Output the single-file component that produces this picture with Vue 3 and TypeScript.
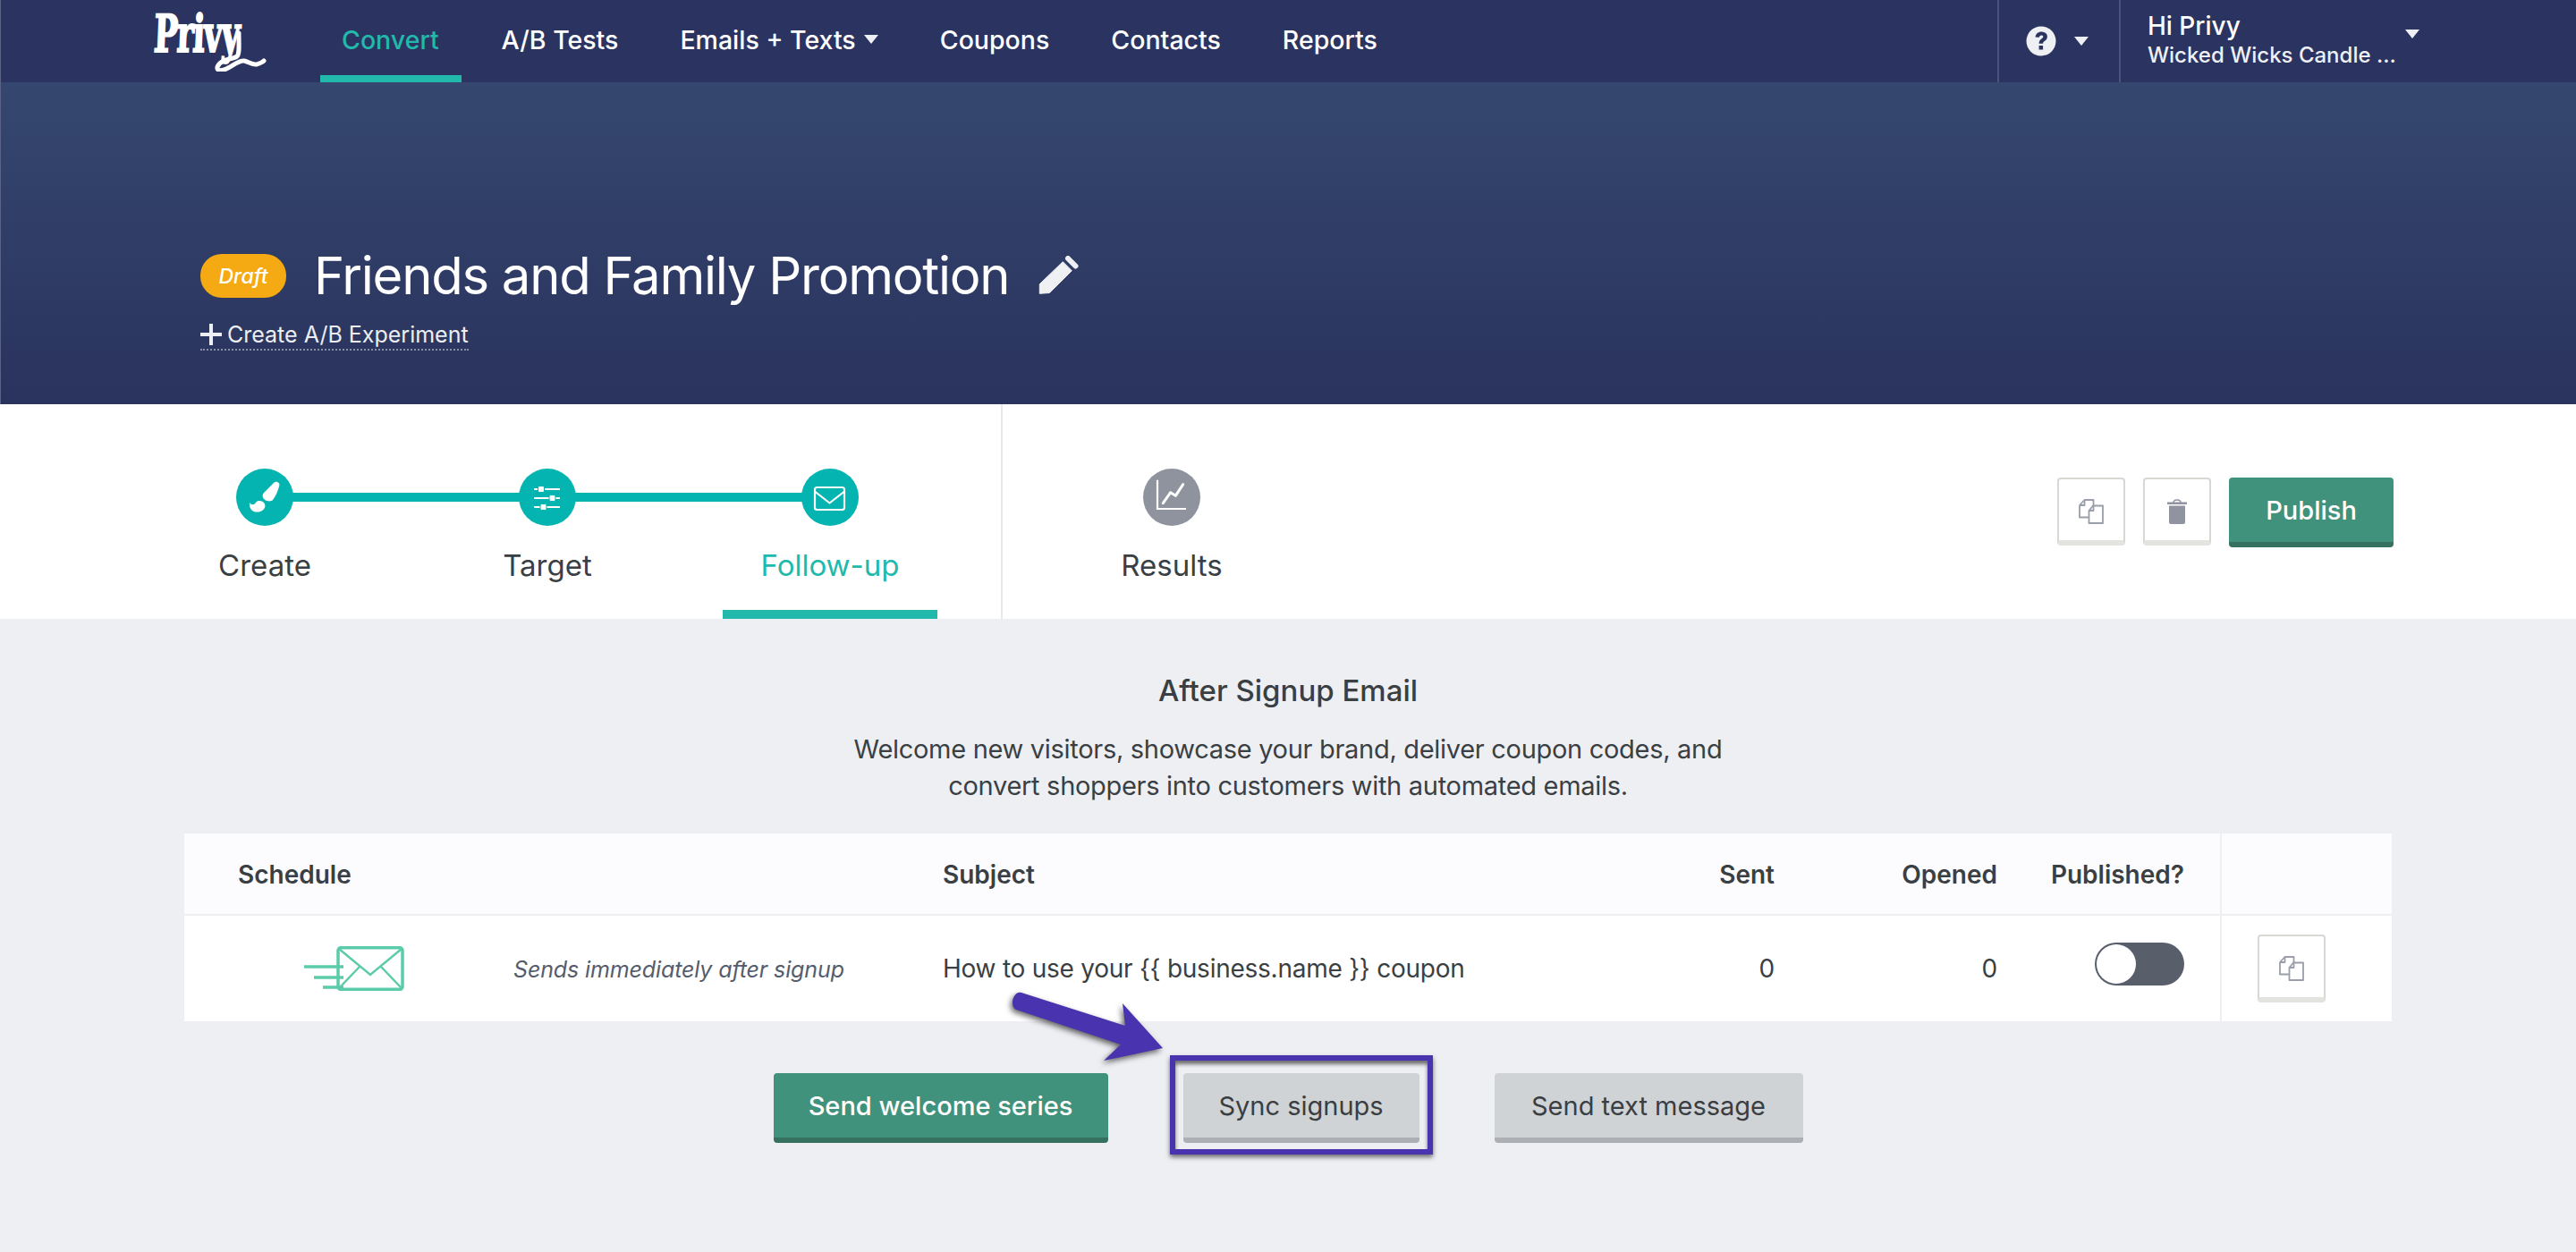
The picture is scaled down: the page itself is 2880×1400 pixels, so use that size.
<script setup lang="ts">
const navItems = [
  { label: 'Convert', active: true },
  { label: 'A/B Tests' },
  { label: 'Emails + Texts', caret: true },
  { label: 'Coupons' },
  { label: 'Contacts' },
  { label: 'Reports' },
]
</script>

<template>
  <div class="page">
    <header class="nav">
      <div class="logo">
        <span class="logo-text">Privy</span>
        <svg class="logo-tail" viewBox="0 0 60 50"><path d="M27 7C27 20 28 30 25 33C20 37 7 35 3 45C2 50 9 49 13 47C20 44 27 37 33 38C38 39 42 43 47 42C50 41 53 40 55 38" fill="none" stroke="#fff" stroke-width="5" stroke-linecap="round" /></svg>
      </div>
      <nav class="nav-links">
        <a v-for="item in navItems" :key="item.label" class="nav-link" :class="{ active: item.active }">
          {{ item.label }}<i v-if="item.caret" class="caret nav-caret"></i>
        </a>
      </nav>
      <div class="nav-help">
        <svg class="help-icon" viewBox="0 0 34 34">
          <circle cx="17" cy="17" r="16.5" fill="#eef0f4" />
          <path d="M10.500 12.500C11 8.800 13.700 6.500 17.400 6.500c3.800 0 6.500 2.300 6.500 5.500 0 2.400-1.200 3.700-3.100 5-1.200.8-1.700 1.400-1.700 2.700h-4.500c0-2.600.9-4 2.700-5.300 1.300-.9 2-1.400 2-2.300 0-.9-.8-1.500-2-1.500-1.300 0-2.100.8-2.300 2.100z" fill="#2b3460" />
          <rect x="14.600" y="22" width="4.500" height="4.500" fill="#2b3460" />
        </svg>
        <i class="caret"></i>
      </div>
      <div class="nav-user">
        <div class="user-text">
          <div class="user-hi">Hi Privy</div>
          <div class="user-store">Wicked Wicks Candle ...</div>
        </div>
        <i class="caret user-caret"></i>
      </div>
    </header>

    <section class="hero">
      <div class="hero-title">
        <span class="badge">Draft</span>
        <h1>Friends and Family Promotion</h1>
        <svg class="pencil" viewBox="0 0 46 46">
          <path d="M1.300 42.300V31.700L27.300 6.700 37.300 16.700 12.300 41.500z" fill="#eef0f4" stroke="#eef0f4" stroke-width="1" stroke-linejoin="round" />
          <path d="M33 3l8.500 8.500" stroke="#eef0f4" stroke-width="6" stroke-linecap="round" fill="none" />
        </svg>
      </div>
      <a class="ab-link"><span class="plus"></span>Create A/B Experiment</a>
    </section>

    <section class="tabs">
      <div class="steps">
        <div class="step done">
          <span class="dot">
            <svg viewBox="0 0 64 64"><path d="M42 16C45 13 50 16 48 20C46 27 44 31 41 35C38 38 31 36 30 32C29 30 30 28 31 27Z" fill="#fff" /><path d="M15 38C17 41 20 41 22 38C24 35 29 36 31 38C34 42 32 46 27 48C21 50 14 47 15 38Z" fill="#fff" /></svg>
          </span>
          <span class="step-label">Create</span>
        </div>
        <div class="step done">
          <span class="dot">
            <svg viewBox="0 0 64 64"><g fill="#fff"><rect x="17" y="22" width="29" height="2" /><rect x="17" y="32" width="29" height="2" /><rect x="17" y="42" width="29" height="2" /></g><g fill="#fff" stroke="#04b4b0" stroke-width="1"><rect x="21.500" y="19.500" width="7" height="7" rx="1.500" /><rect x="34" y="29.500" width="7" height="7" rx="1.500" /><rect x="24" y="39.500" width="7" height="7" rx="1.500" /></g></svg>
          </span>
          <span class="step-label">Target</span>
        </div>
        <div class="step done current">
          <span class="dot">
            <svg viewBox="0 0 64 64"><rect x="15" y="21" width="33" height="25" rx="2.500" fill="none" stroke="#fff" stroke-width="2.200" /><path d="M15.500 26L31.500 38.500 47.500 26" fill="none" stroke="#fff" stroke-width="2.200" stroke-linejoin="round" /></svg>
          </span>
          <span class="step-label">Follow-up</span>
        </div>
      </div>
      <div class="results">
        <div class="step">
          <span class="dot muted">
            <svg viewBox="0 0 64 64"><path d="M16 12.700V45H48" fill="none" stroke="#fff" stroke-width="2.200" /><path d="M22.300 38.700L30.700 26.700 36.300 30.300 44.700 17.700" fill="none" stroke="#fff" stroke-width="3" stroke-linecap="round" stroke-linejoin="round" /></svg>
          </span>
          <span class="step-label">Results</span>
        </div>
      </div>
      <div class="actions">
        <button class="icon-btn">
          <svg viewBox="0 0 28 28"><g fill="#fff" stroke="#9a9ea9" stroke-width="1.800" stroke-linejoin="round"><path d="M6.500 1H16.500V20.500H1V7z" /><path d="M6.500 1.500V7H1.500" fill="none" /><path d="M16 7.500H27V27H11.500V13z" /><path d="M16.500 7.500V13H11.500" fill="none" /></g></svg>
        </button>
        <button class="icon-btn">
          <svg class="trash" viewBox="0 0 22 28"><path d="M0 3.500h22v2.400H0zM2 7.500h18V26c0 1-.8 2-2 2H4c-1 0-2-1-2-2z" fill="#9094a0" /><path d="M7 4C7 0 15 0 15 4" fill="none" stroke="#9094a0" stroke-width="1.600" /></svg>
        </button>
        <button class="btn green publish">Publish</button>
      </div>
    </section>

    <main class="content">
      <h2>After Signup Email</h2>
      <p class="intro">Welcome new visitors, showcase your brand, deliver coupon codes, and<br />convert shoppers into customers with automated emails.</p>

      <div class="table">
        <div class="row head">
          <div class="c-schedule">Schedule</div>
          <div class="c-subject">Subject</div>
          <div class="c-sent">Sent</div>
          <div class="c-opened">Opened</div>
          <div class="c-pub">Published?</div>
          <div class="c-act"></div>
        </div>
        <div class="row body">
          <div class="c-schedule">
            <svg class="mail" viewBox="0 0 112 50">
              <g fill="none" stroke="#5ccbaa" stroke-width="3.500">
                <rect x="38" y="1.800" width="72" height="46.500" rx="3" />
                <path d="M39 3l35 29L109 3M39 47l23-24M109 47L86 23" stroke-width="2.500" />
                <path d="M0 23h44M11 35h33M21 46h23" />
              </g>
            </svg>
            <em>Sends immediately after signup</em>
          </div>
          <div class="c-subject">How to use your &#123;&#123; business.name &#125;&#125; coupon</div>
          <div class="c-sent">0</div>
          <div class="c-opened">0</div>
          <div class="c-pub"><span class="toggle"><span class="knob"></span></span></div>
          <div class="c-act">
            <button class="icon-btn">
              <svg viewBox="0 0 28 28"><g fill="#fff" stroke="#9a9ea9" stroke-width="1.800" stroke-linejoin="round"><path d="M6.500 1H16.500V20.500H1V7z" /><path d="M6.500 1.500V7H1.500" fill="none" /><path d="M16 7.500H27V27H11.500V13z" /><path d="M16.500 7.500V13H11.500" fill="none" /></g></svg>
            </button>
          </div>
        </div>
      </div>

      <div class="cta">
        <button class="btn green welcome">Send welcome series</button>
        <div class="sync-wrap">
          <button class="btn gray sync">Sync signups</button>
          <span class="highlight"></span>
          <svg class="arrow" viewBox="0 0 180 90">
            <path d="M11 2L127 39 124 14 169 64 103 78 122 60 5 21C-3 17 2 -1 11 2Z" fill="#4a33ae" />
          </svg>
        </div>
        <button class="btn gray text-msg">Send text message</button>
      </div>
    </main>
  </div>
</template>

<style>
html, body { margin: 0; background: #eeeff3; }
</style>

<style scoped>
.page {
  width: 2880px;
  height: 1400px;
  overflow: hidden;
  background: #eeeff3;
  font-family: Inter, "Liberation Sans", sans-serif;
  color: #3a3f44;
}
.nav {
  height: 92px;
  display: flex;
  align-items: stretch;
  background: #2b3460;
  color: #fff;
  padding-left: 172px;
  box-sizing: border-box;
  box-shadow: inset 1px 0 #5a6285;
}
.logo { width: 186px; position: relative; }
.logo-text {
  position: absolute;
  left: 0;
  top: 3px;
  font: 700 58px/70px "DejaVu Serif", serif;
  letter-spacing: -2px;
  color: #fff;
  -webkit-text-stroke: 2px #fff;
  transform: scaleX(.62) skewX(-4deg);
  transform-origin: left center;
  white-space: nowrap;
}
.logo-tail { position: absolute; left: 68px; top: 30px; width: 60px; height: 50px; }
.nav-links { display: flex; flex: 1; }
.nav-link {
  display: flex;
  align-items: center;
  padding: 0 24px 4px;
  margin-right: 21px;
  font-size: 28.5px;
  font-weight: 500;
  height: 92px;
  box-sizing: border-box;
  white-space: nowrap;
}
.nav-link.active {
  color: #22b9ac;
  border-bottom: 8px solid #22b9ac;
  padding: 4px 25px 0 24px;
}
.caret {
  display: inline-block;
  width: 0;
  height: 0;
  border-left: 8px solid transparent;
  border-right: 8px solid transparent;
  border-top: 10px solid #eef0f4;
}
.nav-caret { margin-left: 9px; }
.nav-help {
  width: 138px;
  box-sizing: border-box;
  border-left: 2px solid #4a5379;
  border-right: 2px solid #4a5379;
  display: flex;
  align-items: center;
  gap: 20px;
  padding-left: 30px;
}
.help-icon { width: 34px; height: 34px; }
.nav-user {
  width: 509px;
  padding-left: 30px;
  display: flex;
  box-sizing: border-box;
}
.user-text { padding-top: 11px; }
.user-hi { font-size: 28px; line-height: 36px; font-weight: 500; }
.user-store { font-size: 24px; line-height: 30px; font-weight: 500; color: #eef0f4; }
.user-caret { margin: 33px 0 0 10px; }

.hero {
  height: 360px;
  box-sizing: border-box;
  padding: 192px 0 0 224px;
  background: linear-gradient(#35476f, #2a335e);
  color: #fff;
  box-shadow: inset 1px 0 #5a6285;
}
.hero-title { display: flex; align-items: center; }
.badge {
  width: 96px;
  height: 49px;
  border-radius: 24px;
  background: #f5a912;
  display: flex;
  align-items: center;
  justify-content: center;
  font-size: 23px;
  font-style: italic;
  font-weight: 500;
}
h1 {
  margin: 0 0 0 31px;
  font-size: 58px;
  line-height: 49px;
  letter-spacing: -1.25px;
  font-weight: 400;
  white-space: nowrap;
}
.pencil { width: 46px; height: 46px; margin-left: 33px; }
.ab-link {
  display: inline-flex;
  align-items: center;
  margin-top: 24px;
  height: 33px;
  font-size: 25px;
  color: #eceef3;
  border-bottom: 2px dotted #8a8fa8;
}
.plus { position: relative; width: 24px; height: 24px; margin-right: 6px; }
.plus::before, .plus::after { content: ""; position: absolute; background: #eceef3; }
.plus::before { left: 0; right: 0; top: 10px; height: 4px; }
.plus::after { top: 0; bottom: 0; left: 10px; width: 4px; }

.tabs {
  height: 240px;
  background: #fff;
  display: flex;
}
.steps {
  width: 943px;
  padding-left: 176px;
  display: flex;
  gap: 76px;
  border-right: 2px solid #e8e8ea;
}
.results { padding-left: 69px; flex: 1; }
.step {
  position: relative;
  width: 240px;
  height: 240px;
  box-sizing: border-box;
  padding-top: 72px;
  display: flex;
  flex-direction: column;
  align-items: center;
}
.step.done:not(:last-child)::after {
  content: "";
  position: absolute;
  left: 120px;
  top: 99px;
  width: 316px;
  height: 10px;
  background: #04b4b0;
}
.dot {
  position: relative;
  z-index: 1;
  width: 64px;
  height: 64px;
  border-radius: 50%;
  background: #04b4b0;
}
.dot.muted { background: #8e939e; }
.dot svg { display: block; width: 64px; height: 64px; }
.step-label {
  margin-top: 24px;
  font-size: 33px;
  line-height: 40px;
  color: #3a3f44;
}
.current { border-bottom: 10px solid #22b9ac; }
.current .step-label { color: #21b9ac; }

.actions {
  display: flex;
  align-items: flex-start;
  gap: 20px;
  padding: 82px 204px 0 0;
}
button { font-family: inherit; cursor: pointer; }
.icon-btn {
  width: 76px;
  height: 76px;
  padding: 4px 0 0;
  background: #fff;
  border: 2px solid #d8d8d3;
  border-bottom-width: 6px;
  border-bottom-color: #e3e3e0;
  border-radius: 4px;
  display: flex;
  align-items: center;
  justify-content: center;
  box-sizing: border-box;
}
.icon-btn svg { width: 28px; height: 28px; display: block; }
.icon-btn svg.trash { width: 22px; height: 28px; }
.btn {
  height: 78px;
  border: 0;
  border-bottom: 6px solid;
  border-radius: 4px;
  font-size: 29px;
  font-weight: 500;
  padding: 0;
  box-sizing: border-box;
}
.green { background: #41927d; border-color: #36705f; color: #fff; }
.gray { background: #cfd3d6; border-color: #acafb3; color: #3a3e42; font-weight: 400; }
.publish { width: 184px; }
.welcome { width: 374px; }
.sync { width: 264px; display: block; }
.text-msg { width: 345px; }

.content { text-align: center; padding-top: 60px; }
h2 {
  margin: 0;
  font-size: 33px;
  line-height: 40px;
  font-weight: 500;
}
.intro {
  margin: 25px 0 0;
  font-size: 29px;
  line-height: 41px;
  letter-spacing: -.3px;
}
.table {
  margin: 33px 206px 0;
  text-align: left;
}
.row { display: flex; }
.head { height: 92px; padding-top: 2px; background: #fcfcfe; border-bottom: 2px solid #eeeff3; font-size: 28px; font-weight: 600; box-sizing: border-box; }
.body { height: 118px; background: #fff; font-size: 28px; letter-spacing: -.25px; }
.row > div { display: flex; align-items: center; }
.c-schedule { width: 848px; padding-left: 60px; box-sizing: border-box; }
.c-subject { width: 820px; white-space: nowrap; }
.c-sent { width: 110px; justify-content: flex-end; }
.c-opened { width: 249px; justify-content: flex-end; }
.c-pub { width: 209px; justify-content: flex-end; }
.c-act { margin-left: 40px; width: 192px; border-left: 2px solid #eeeff3; padding-left: 40px; box-sizing: border-box; }
.head .c-act { margin-top: -2px; }
.mail { width: 112px; height: 50px; margin-left: 74px; flex: none; }
.body .c-schedule em { margin: 2px 0 0 122px; font-size: 25px; letter-spacing: -.12px; color: #555c6b; white-space: nowrap; }
.toggle {
  width: 100px;
  height: 48px;
  margin-bottom: 10px;
  box-sizing: border-box;
  border-radius: 24px;
  background: #585f6b;
  padding: 2px;
  display: block;
}
.knob { display: block; width: 44px; height: 44px; border-radius: 50%; background: #fff; }

.cta {
  display: flex;
  justify-content: center;
  gap: 84px;
  margin-top: 58px;
}
.sync-wrap { position: relative; }
.highlight {
  position: absolute;
  left: -15px;
  right: -15px;
  top: -20px;
  bottom: -13px;
  border: 6px solid #4a33ae;
  box-shadow: 0 3px 5px rgba(0, 0, 0, .55), inset 0 4px 4px rgba(0, 0, 0, .55);
  pointer-events: none;
}
.arrow {
  position: absolute;
  left: -192px;
  top: -92px;
  width: 180px;
  height: 90px;
  overflow: visible;
  filter: drop-shadow(-2px 3px 3px rgba(0, 0, 0, .6));
}
</style>
